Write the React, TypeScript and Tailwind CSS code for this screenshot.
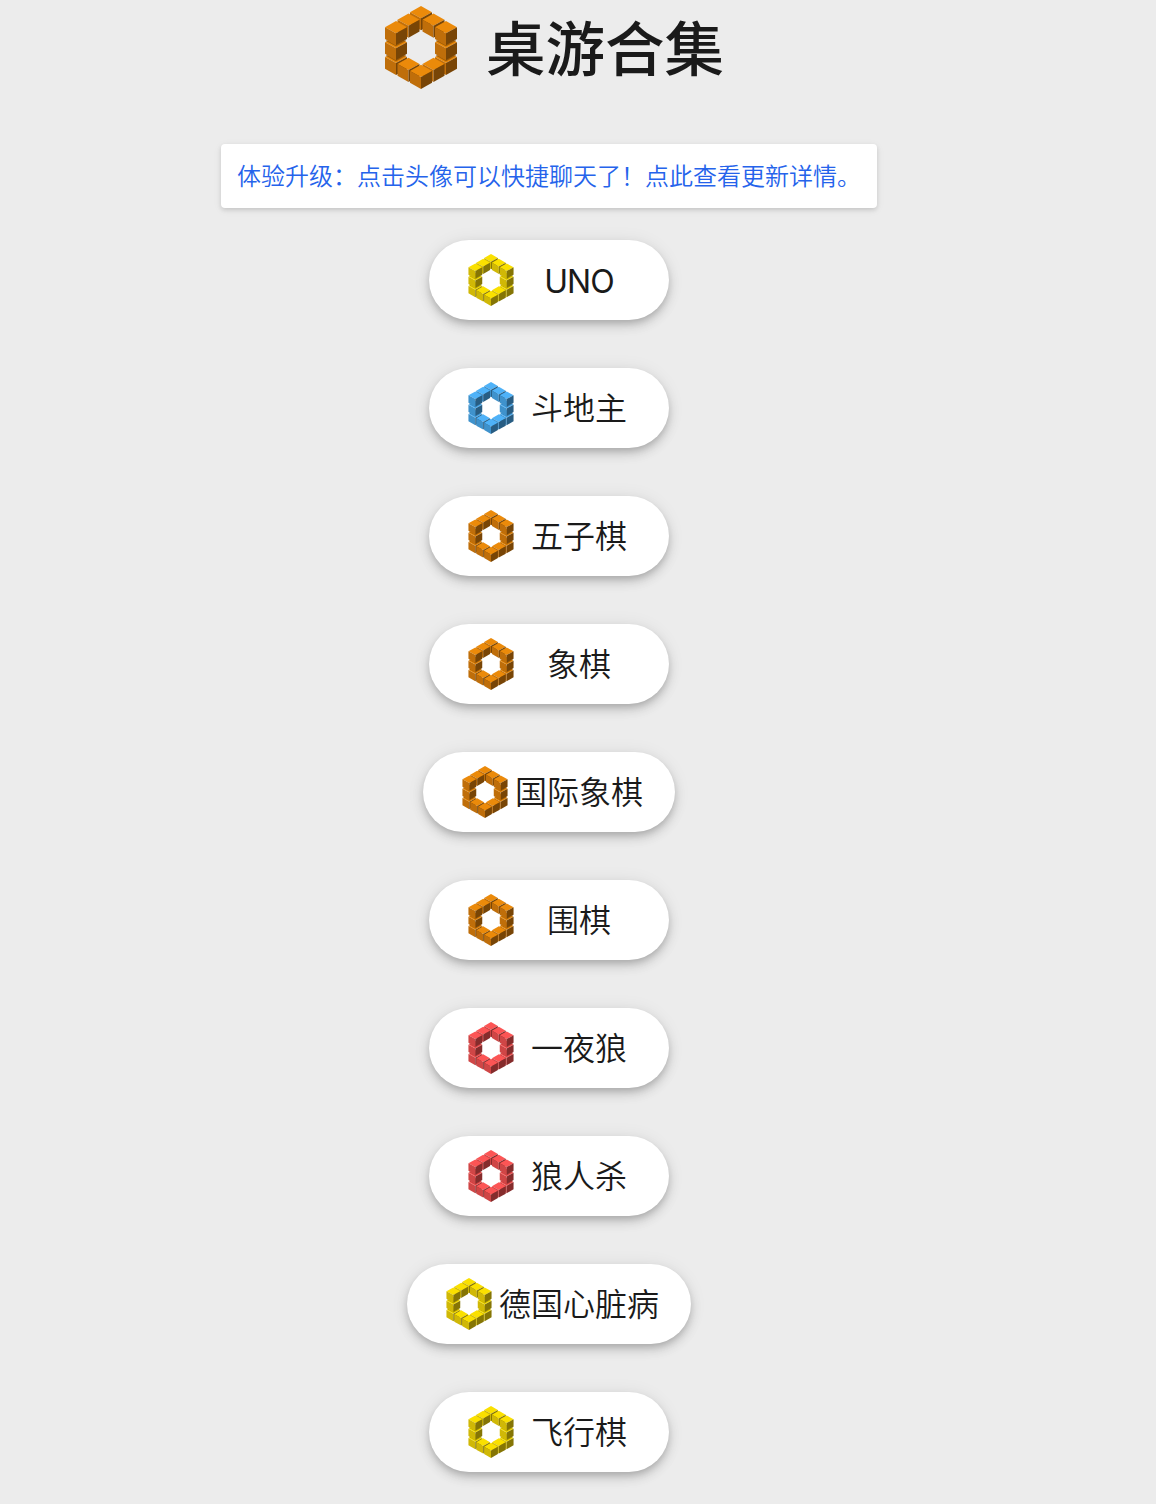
type Palette = { top: string; left: string; right: string };

const orange: Palette = { top: '#eb8a0a', left: '#bf6e0a', right: '#784506' };
const yellow: Palette = { top: '#fae000', left: '#d0b806', right: '#857505' };
const blue: Palette = { top: '#4fb2f8', left: '#3f92cc', right: '#285d83' };
const red: Palette = { top: '#fc5555', left: '#cf4646', right: '#852c2c' };

// Centre lines and left corner heights of the cubes, painted back to front.
const cubes = [
  [108, 19], [70.5, 41.5], [145.5, 41.5],
  [33, 153], [183, 153], [33, 108.5], [183, 108.5], [33, 64], [183, 64],
  [70.5, 174], [145.5, 174], [108, 195],
];

// Shade under the cubes that stand on another one.
const stacked = [64, 108.5];

function Ring({ palette, className }: { palette: Palette; className: string }) {
  return (
    <svg viewBox="0 0 216 249" className={className} aria-hidden="true">
      {cubes.map(([x, y]) => (
        <g key={`${x}-${y}`} transform={`translate(${x} ${y})`}>
          {stacked.includes(y) && (
            <path d="M-29 39 0 55.5 29 39" fill="none" stroke={palette.right} strokeWidth="4" strokeOpacity="0.6" />
          )}
          <path d="M0-19 33 0 0 18-33 0Z" fill={palette.top} />
          <path d="M-33 0 0 18V54L-33 35Z" fill={palette.left} />
          <path d="M33 0 0 18V54L33 35Z" fill={palette.right} />
        </g>
      ))}
    </svg>
  );
}

const games: { name: string; palette: Palette }[] = [
  { name: 'UNO', palette: yellow },
  { name: '斗地主', palette: blue },
  { name: '五子棋', palette: orange },
  { name: '象棋', palette: orange },
  { name: '国际象棋', palette: orange },
  { name: '围棋', palette: orange },
  { name: '一夜狼', palette: red },
  { name: '狼人杀', palette: red },
  { name: '德国心脏病', palette: yellow },
  { name: '飞行棋', palette: yellow },
];

export default function App() {
  return (
    <div className="h-[1504px] overflow-hidden bg-[#ececec] font-[Inter,'Noto_Sans_CJK_SC',sans-serif] text-[#1a1a1a]">
      <main className="flex w-[1098px] flex-col items-center">
        <header className="flex h-24 items-center gap-[29px] pl-[11px]">
          <Ring palette={orange} className="mb-px h-[83px] w-[72px]" />
          <h1 className="pt-[3px] text-[59.5px] leading-[93px] font-medium whitespace-nowrap">桌游合集</h1>
        </header>
        <a
          href="#"
          className="mt-12 flex h-16 w-[656px] items-center rounded bg-white px-4 pt-0.5 text-2xl font-[350] whitespace-nowrap text-[#2563eb] shadow-[0_2px_4px_rgba(0,0,0,0.12),0_2px_10px_rgba(0,0,0,0.06)]"
        >
          体验升级：点击头像可以快捷聊天了！点此查看更新详情。
        </a>
        <nav className="mt-8 flex flex-col items-center gap-12">
          {games.map(({ name, palette }) => (
            <button
              key={name}
              className="flex h-20 min-w-60 items-center rounded-full bg-white px-8 text-[32px] leading-none font-[350] whitespace-nowrap shadow-[0_4px_6px_-1px_rgba(0,0,0,0.14),0_6px_12px_rgba(0,0,0,0.13),0_1px_18px_rgba(0,0,0,0.07)]"
            >
              <span className="flex w-15 justify-center">
                <Ring palette={palette} className="h-[52px] w-[46px]" />
              </span>
              <span
                className={
                  name === 'UNO'
                    ? 'flex-1 pt-[3px] text-center font-normal tracking-[-1px]'
                    : 'flex-1 pt-0.5 text-center'
                }
              >
                {name}
              </span>
            </button>
          ))}
        </nav>
      </main>
    </div>
  );
}
